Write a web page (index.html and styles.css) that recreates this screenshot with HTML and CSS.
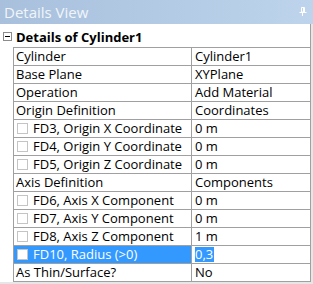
FILE: index.html
```html
<!DOCTYPE html>
<html>
<head>
<meta charset="utf-8">
<link rel="stylesheet" href="styles.css">
</head>
<body>
<div class="panel">
  <div class="titlebar">
    <span class="title">Details View</span>
    <svg class="pin" width="8" height="9" viewBox="0 0 8 9">
      <path d="M2.5 0.5h3v4.5h-3z" fill="none" stroke="#ffffff" stroke-width="1"/>
      <path d="M4.5 0.5v4.5" stroke="#ffffff" stroke-width="1"/>
      <path d="M0.5 5.5h7" stroke="#ffffff" stroke-width="1"/>
      <path d="M3.5 5.5v3.5" stroke="#ffffff" stroke-width="1"/>
    </svg>
  </div>
  <div class="grid">
    <div class="header">
      <span class="toggle"><span class="minus"></span></span>
      <span class="header-text">Details of Cylinder1</span>
    </div>
    <div class="rows">
      <div class="row"><div class="name">Cylinder</div><div class="val">Cylinder1</div></div>
      <div class="row"><div class="name">Base Plane</div><div class="val">XYPlane</div></div>
      <div class="row"><div class="name">Operation</div><div class="val">Add Material</div></div>
      <div class="row"><div class="name">Origin Definition</div><div class="val">Coordinates</div></div>
      <div class="row"><div class="name"><span class="check"></span>FD3, Origin X Coordinate</div><div class="val">0 m</div></div>
      <div class="row"><div class="name"><span class="check"></span>FD4, Origin Y Coordinate</div><div class="val">0 m</div></div>
      <div class="row"><div class="name"><span class="check"></span>FD5, Origin Z Coordinate</div><div class="val">0 m</div></div>
      <div class="row"><div class="name">Axis Definition</div><div class="val">Components</div></div>
      <div class="row"><div class="name"><span class="check"></span>FD6, Axis X Component</div><div class="val">0 m</div></div>
      <div class="row"><div class="name"><span class="check"></span>FD7, Axis Y Component</div><div class="val">0 m</div></div>
      <div class="row"><div class="name"><span class="check"></span>FD8, Axis Z Component</div><div class="val">1 m</div></div>
      <div class="row selected"><div class="name"><span class="check"></span>FD10, Radius (&gt;0)</div><div class="val"><span class="edit">0,3</span></div></div>
      <div class="row"><div class="name">As Thin/Surface?</div><div class="val">No</div></div>
    </div>
  </div>
</div>
</body>
</html>
```

FILE: styles.css
```css
html, body {
  margin: 0;
  padding: 0;
}
body {
  width: 313px;
  height: 284px;
  background: #e6e6e6;
  font-family: "Open Sans", "Noto Sans", sans-serif;
  font-size: 13px;
  color: #000;
  overflow: hidden;
}
.panel {
  width: 313px;
}
.titlebar {
  height: 24px;
  background: linear-gradient(to right, #a8c0dc, #bdd4ec);
  display: flex;
  align-items: center;
  justify-content: space-between;
  padding: 0 6px 0 4px;
  box-sizing: border-box;
}
.title {
  color: #f1f5fa;
  font-family: "Open Sans", sans-serif;
  font-size: 15px;
  line-height: 24px;
  margin-top: -1px;
}
.pin {
  display: block;
  margin-top: -2px;
}
.grid {
  width: 311px;
  box-sizing: border-box;
  background: #fff;
  border-right: 1px solid #a0a0a0;
}
.header {
  height: 23px;
  display: flex;
  align-items: center;
}
.toggle {
  width: 9px;
  height: 9px;
  box-sizing: border-box;
  border: 1px solid #8c8c8c;
  margin-left: 3px;
  margin-top: 2px;
  display: flex;
  align-items: center;
  justify-content: center;
  background: #fff;
}
.minus {
  width: 5px;
  height: 1px;
  background: #000;
}
.header-text {
  font-weight: bold;
  margin-left: 4px;
  margin-top: 2px;
}
.rows {
  margin-left: 13px;
  border-left: 1px solid #a0a0a0;
  border-top: 1px solid #a0a0a0;
}
.row {
  display: flex;
  height: 17px;
  border-bottom: 1px solid #a0a0a0;
}
.name {
  width: 175px;
  border-right: 1px solid #a0a0a0;
  display: flex;
  align-items: center;
  padding-left: 2px;
  white-space: nowrap;
  overflow: hidden;
  line-height: 17px;
}
.val {
  flex: 1;
  display: flex;
  align-items: center;
  padding-left: 3px;
  white-space: nowrap;
  line-height: 17px;
}
.check {
  width: 11px;
  height: 11px;
  box-sizing: border-box;
  border: 1px solid #c4c4c4;
  background: #fff;
  margin-left: 1px;
  margin-right: 5px;
  flex: none;
}
.selected .name {
  background: #3399ff;
  color: #fff;
}
.edit {
  background: #3399ff;
  color: #fff;
  line-height: 15px;
  padding: 0 1px 0 0;
}
```
